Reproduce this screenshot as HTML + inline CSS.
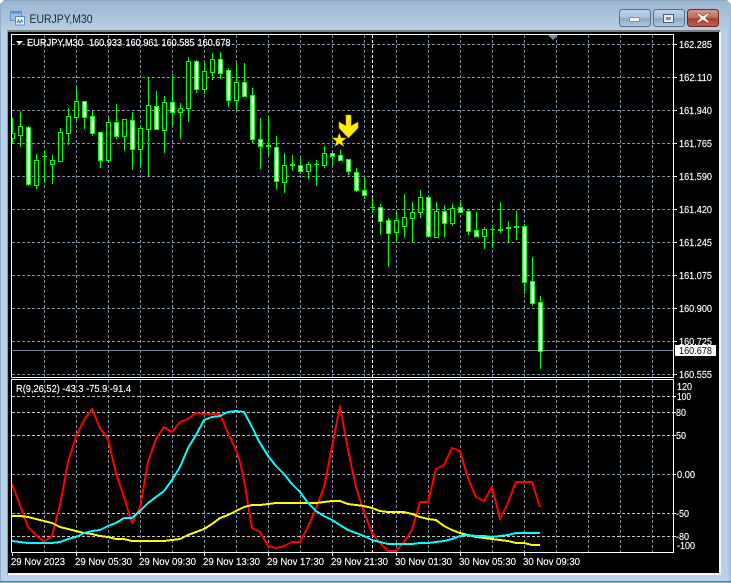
<!DOCTYPE html>
<html><head><meta charset="utf-8"><title>EURJPY,M30</title>
<style>
html,body{margin:0;padding:0;width:731px;height:583px;overflow:hidden;background:#fff}
svg{display:block}
text{font-family:"Liberation Sans",sans-serif;font-size:10.5px;fill:#fff;stroke:#fff;stroke-width:.15px}
</style></head><body>
<svg width="731" height="583" viewBox="0 0 731 583" xmlns="http://www.w3.org/2000/svg">
<defs>
<linearGradient id="tb" x1="0" y1="0" x2="0" y2="1"><stop offset="0" stop-color="#9cb6d0"/><stop offset=".55" stop-color="#aac2da"/><stop offset="1" stop-color="#b9cfe5"/></linearGradient>
<linearGradient id="btn" x1="0" y1="0" x2="0" y2="1"><stop offset="0" stop-color="#c3d5e8"/><stop offset=".48" stop-color="#a9c0d9"/><stop offset=".52" stop-color="#8aa6c4"/><stop offset="1" stop-color="#b4cbe2"/></linearGradient>
<linearGradient id="cl" x1="0" y1="0" x2="0" y2="1"><stop offset="0" stop-color="#d9988a"/><stop offset=".48" stop-color="#c46a5a"/><stop offset=".52" stop-color="#ac3c2c"/><stop offset="1" stop-color="#c4604c"/></linearGradient>
<clipPath id="up"><rect x="12" y="35" width="661" height="342"/></clipPath>
<clipPath id="lo"><rect x="12" y="380" width="661" height="172"/></clipPath>
</defs>
<rect x="0" y="0" width="731" height="583" rx="5" fill="#b9d2ea"/>
<rect x="0" y="0" width="731" height="31" fill="url(#tb)"/>
<path d="M0 5Q0 0 5 0H726Q731 0 731 5" fill="none" stroke="#7d93a8" stroke-width="1"/>
<path d="M0 0H4L0 4zM731 0H727L731 4z" fill="#fff"/>
<rect x="0" y="581" width="731" height="1" fill="#3d8a9c"/>
<rect x="0" y="582" width="731" height="1" fill="#7fb2c4"/>
<rect x="729" y="4" width="2" height="577" fill="#a3bfd8"/>
<rect x="0" y="4" width="1" height="577" fill="#8fb0cc"/>

<!-- title icon -->
<rect x="10.5" y="11.5" width="11" height="9" fill="#9cc0ea" stroke="#5b8ccb"/>
<rect x="10.5" y="11.5" width="11" height="2" fill="#5b8ccb"/>
<rect x="15.5" y="16.5" width="9" height="8.5" fill="#e8f1fb" stroke="#5b8ccb"/>
<path d="M17 23l1.5-3 1.5 3 1.5-3 1 2" fill="none" stroke="#3f76bb"/>
<text x="29.5" y="23" style="font-size:12px;fill:#1c2733;stroke:none" textLength="63" lengthAdjust="spacingAndGlyphs">EURJPY,M30</text>

<!-- window buttons -->
<rect x="619.5" y="9.5" width="31" height="17" rx="3" fill="url(#btn)" stroke="#5c6f86"/>
<rect x="629.5" y="17.5" width="10" height="4" rx="1" fill="#eef2f6" stroke="#66788e" stroke-width=".8"/>
<rect x="653.5" y="9.5" width="31" height="17" rx="3" fill="url(#btn)" stroke="#5c6f86"/>
<rect x="663.5" y="14.5" width="10" height="8" fill="#e8eef4" stroke="#4d6076"/>
<rect x="666" y="17" width="5" height="3" fill="#7f93a8"/>
<rect x="687.5" y="9.5" width="31" height="17" rx="3" fill="url(#cl)" stroke="#6b2b24"/>
<path d="M699 13.5l4 2.5 4-2.5 3 0-4.5 4.5 4.5 4.5-3 0-4-2.5-4 2.5-3 0 4.5-4.5-4.5-4.5z" fill="#f4f2f0" stroke="#8a4a40" stroke-width=".6"/>

<!-- client area -->
<rect x="7" y="30" width="713" height="2" fill="#7c7f82"/>
<rect x="7" y="30" width="1" height="545" fill="#8f9aa6"/>
<rect x="8" y="32" width="711" height="541" fill="#000"/>
<rect x="8" y="573" width="713" height="2" fill="#f2f5f8"/>
<rect x="719" y="32" width="2" height="543" fill="#f2f5f8"/>

<!-- grids -->
<g shape-rendering="crispEdges" fill="none">
<path clip-path="url(#up)" stroke="#7f90a2" stroke-dasharray="3 2" d="M12 44.5H673M12 77.5H673M12 110.5H673M12 143.5H673M12 176.5H673M12 209.5H673M12 242.5H673M12 275.5H673M12 308.5H673M12 341.5H673M12 374.5H673"/>
<path clip-path="url(#up)" stroke="#7f90a2" stroke-dasharray="3 2" d="M44.5 35V377M76.5 35V377M108.5 35V377M140.5 35V377M172.5 35V377M204.5 35V377M236.5 35V377M268.5 35V377M300.5 35V377M332.5 35V377M364.5 35V377M396.5 35V377M428.5 35V377M460.5 35V377M492.5 35V377M524.5 35V377M556.5 35V377M588.5 35V377M620.5 35V377M652.5 35V377"/>
<path clip-path="url(#up)" stroke="#fff" stroke-dasharray="3 2" d="M372.5 35V377"/>
<path stroke="#778899" d="M12 350.5H673"/>
<path clip-path="url(#lo)" stroke="#7f90a2" stroke-dasharray="3 2" d="M44.5 380V552M76.5 380V552M108.5 380V552M140.5 380V552M172.5 380V552M204.5 380V552M236.5 380V552M268.5 380V552M300.5 380V552M332.5 380V552M364.5 380V552M396.5 380V552M428.5 380V552M460.5 380V552M492.5 380V552M524.5 380V552M556.5 380V552M588.5 380V552M620.5 380V552M652.5 380V552"/>
<path clip-path="url(#lo)" stroke="#fff" stroke-dasharray="3 2" d="M372.5 380V552"/>
<path clip-path="url(#lo)" stroke="#c8c8c8" stroke-dasharray="3 2" d="M12 396.5H673M12 412.5H673M12 435.5H673M12 513.5H673M12 536.5H673"/>
<path clip-path="url(#lo)" stroke="#8c9aa8" stroke-dasharray="3 2" d="M12 474.5H673"/>

<!-- candles -->
<g clip-path="url(#up)">
<path stroke="#00ff00" d="M12.5 118V143M20.5 111V147M28.5 126V186M36.5 154V189M44.5 150V183M52.5 155V184M60.5 128V162M68.5 108V145M76.5 88V120M84.5 101V129M92.5 111V136M100.5 132V168M108.5 118V160M116.5 104V139M124.5 119V151M132.5 112V170M140.5 125V168M148.5 78V176M156.5 91V129M164.5 96V153M172.5 74V126M180.5 103V139M188.5 57V122M196.5 60V93M204.5 62V94M212.5 53V80M220.5 52V79M228.5 68V107M236.5 63V111M244.5 63V96M252.5 88V144M260.5 118V169M268.5 116V156M276.5 136V189M284.5 153V193M292.5 155V171M300.5 157V174M308.5 162V179M316.5 160V186M324.5 146V168M332.5 153V165M340.5 150V161M348.5 159V175M356.5 168V192M364.5 178V199M372.5 197V213M380.5 204V235M388.5 218V267M396.5 212V241M404.5 194V237M412.5 202V243M420.5 190V218M428.5 196V238M436.5 202V238M444.5 205V237M452.5 204V226M460.5 201V213M468.5 209V235M476.5 212V236M484.5 227V249M492.5 226V247M500.5 202V233M508.5 221V243M516.5 211V240M524.5 224V294M532.5 257V306M540.5 296V369"/>
<path stroke="#00ff00" d="M42 156.5h5M266 146.5h5M266 145.5h5M290 165.5h5M290 164.5h5M314 164.5h5M370 207.5h5M490 229.5h5M498 230.5h5M498 229.5h5M506 228.5h5M506 227.5h5M514 227.5h5M514 226.5h5"/>
<path stroke="#00ff00" fill="#000" d="M10.5 133.5h4v5h-4zM18.5 126.5h4v9h-4zM34.5 160.5h4v25h-4zM50.5 160.5h4v4h-4zM58.5 132.5h4v29h-4zM66.5 116.5h4v17h-4zM74.5 101.5h4v16h-4zM106.5 122.5h4v38h-4zM122.5 119.5h4v17h-4zM138.5 128.5h4v21h-4zM146.5 105.5h4v24h-4zM162.5 102.5h4v28h-4zM178.5 108.5h4v4h-4zM186.5 61.5h4v47h-4zM202.5 71.5h4v18h-4zM210.5 59.5h4v13h-4zM234.5 82.5h4v18h-4zM282.5 165.5h4v17h-4zM306.5 164.5h4v7h-4zM322.5 153.5h4v12h-4zM394.5 220.5h4v12h-4zM402.5 217.5h4v9h-4zM410.5 212.5h4v6h-4zM418.5 197.5h4v15h-4zM434.5 211.5h4v26h-4zM450.5 208.5h4v15h-4zM482.5 229.5h4v7h-4z"/>
<path stroke="#00ff00" fill="#fff" d="M26.5 127.5h4v57h-4zM82.5 101.5h4v16h-4zM90.5 116.5h4v17h-4zM98.5 132.5h4v28h-4zM114.5 122.5h4v14h-4zM130.5 120.5h4v29h-4zM154.5 106.5h4v23h-4zM170.5 102.5h4v10h-4zM194.5 61.5h4v28h-4zM218.5 59.5h4v14h-4zM226.5 70.5h4v30h-4zM242.5 82.5h4v14h-4zM250.5 95.5h4v44h-4zM258.5 139.5h4v7h-4zM274.5 147.5h4v34h-4zM298.5 165.5h4v6h-4zM330.5 153.5h4v3h-4zM338.5 155.5h4v5h-4zM346.5 159.5h4v12h-4zM354.5 172.5h4v18h-4zM362.5 190.5h4v5h-4zM378.5 207.5h4v14h-4zM386.5 220.5h4v13h-4zM426.5 197.5h4v39h-4zM442.5 211.5h4v12h-4zM458.5 207.5h4v5h-4zM466.5 211.5h4v20h-4zM474.5 230.5h4v6h-4zM522.5 226.5h4v56h-4zM530.5 281.5h4v22h-4zM538.5 302.5h4v49h-4z"/>
</g>

<!-- indicator lines -->
<g clip-path="url(#lo)" stroke-width="2" stroke-linejoin="round">
<polyline stroke="#ff0000" points="12,484 20,505 28,527 36,535 44,542 52,536 60,505 68,462 76,437 84,420 92,409 100,428 108,439 116,473 124,497 132,523 140,508 148,462 156,439 164,427 172,432 180,422 188,419 196,413 204,414 212,414 220,414 228,433 236,450 240,462 244,480 252,528 260,532 268,546 276,548 284,546 292,542 300,542 308,527 316,508 324,487 332,447 340,406 348,450 356,487 364,512 372,533 380,543 388,551 396,551 404,542 412,530 420,502 428,502 436,469 444,465 452,448 460,451 468,478 476,497 484,501 492,487 500,519 508,503 516,482 524,482 532,482 540,507"/>
<polyline stroke="#ffff00" points="12,516 20,516 28,517 36,519 44,521 52,523 60,527 68,529 76,531 84,533 92,534 100,536 108,537 116,539 124,539 132,541 140,541 148,541 156,541 164,541 172,540 180,539 188,535 196,532 204,529 212,524 220,518 228,515 236,511 244,507 252,505 260,505 268,504 276,503 284,503 292,503 300,503 308,503 316,503 324,502 332,501 340,501 348,504 356,505 364,506 372,508 380,511 388,512 396,512 404,512 412,514 420,517 428,519 436,520 444,526 452,530 460,533 468,535 476,537 484,538 492,539 500,540 508,541 516,543 524,543 532,545 540,545"/>
<polyline stroke="#00ffff" points="12,541 20,542 28,543 36,543 44,543 52,543 60,542 68,539 76,537 84,533 92,531 100,530 108,526 116,523 124,518 132,518 140,511 148,503 156,497 164,491 172,480 180,467 188,448 196,435 204,420 212,417 220,416 228,412 236,411 244,412 252,427 260,443 268,456 276,466 284,474 292,484 300,492 308,503 316,511 324,516 332,520 340,525 348,530 356,533 364,536 372,540 380,542 388,544 396,544 404,544 412,544 420,543 428,543 436,542 444,541 452,539 460,536 468,535 476,536 484,536 492,537 500,536 508,535 516,533 524,533 532,533 540,533"/>
</g>

<!-- frames -->
<path stroke="#fff" d="M11.5 377.5V34.5H673.5V377.5H11.5"/>
<path stroke="#fff" d="M11.5 552.5V379.5H673.5V552.5H11.5"/>
<!-- ticks -->
<path stroke="#fff" d="M674 44.5h3M674 77.5h3M674 110.5h3M674 143.5h3M674 176.5h3M674 209.5h3M674 242.5h3M674 275.5h3M674 308.5h3M674 341.5h3M674 374.5h3M674 396.5h2M674 412.5h2M674 435.5h2M674 474.5h2M674 513.5h2M674 536.5h2M12.5 553v3M76.5 553v3M140.5 553v3M204.5 553v3M268.5 553v3M332.5 553v3M396.5 553v3M460.5 553v3M524.5 553v3"/>
</g>

<!-- marker triangle -->
<path d="M548 35h10l-5 5z" fill="#7f8fa3"/>
<!-- arrow + star -->
<polygon points="346,115 351,115 351,126 358,122 358,128 348.5,138 339,128 339,122 346,126" fill="#ffee00" stroke="#d9a400" stroke-width=".6"/>
<polygon points="339.3,133 341,138 346.4,138 342,141.3 343.7,146.5 339.3,143.3 334.9,146.5 336.6,141.3 332.2,138 337.6,138" fill="#ffee00" stroke="#d9a400" stroke-width=".5"/>

<!-- header -->
<path d="M16 41h7l-3.5 3.5z" fill="#fff"/>
<text x="27" y="46" textLength="56" lengthAdjust="spacingAndGlyphs">EURJPY,M30</text>
<text x="89" y="46" textLength="33" lengthAdjust="spacingAndGlyphs">160.933</text>
<text x="125.5" y="46" textLength="33" lengthAdjust="spacingAndGlyphs">160.961</text>
<text x="161.5" y="46" textLength="33" lengthAdjust="spacingAndGlyphs">160.585</text>
<text x="197.5" y="46" textLength="33" lengthAdjust="spacingAndGlyphs">160.678</text>
<text x="16" y="392" textLength="115" lengthAdjust="spacingAndGlyphs">R(9,26,52) -43.3 -75.9 -91.4</text>

<!-- price axis -->
<g>
<text x="679" y="48" textLength="33" lengthAdjust="spacingAndGlyphs">162.285</text>
<text x="679" y="81" textLength="33" lengthAdjust="spacingAndGlyphs">162.110</text>
<text x="679" y="114" textLength="33" lengthAdjust="spacingAndGlyphs">161.940</text>
<text x="679" y="147" textLength="33" lengthAdjust="spacingAndGlyphs">161.765</text>
<text x="679" y="180" textLength="33" lengthAdjust="spacingAndGlyphs">161.590</text>
<text x="679" y="213" textLength="33" lengthAdjust="spacingAndGlyphs">161.420</text>
<text x="679" y="246" textLength="33" lengthAdjust="spacingAndGlyphs">161.245</text>
<text x="679" y="279" textLength="33" lengthAdjust="spacingAndGlyphs">161.075</text>
<text x="679" y="312" textLength="33" lengthAdjust="spacingAndGlyphs">160.900</text>
<text x="679" y="345" textLength="33" lengthAdjust="spacingAndGlyphs">160.725</text>
<text x="679" y="378" textLength="33" lengthAdjust="spacingAndGlyphs">160.555</text>
<rect x="675" y="345" width="41" height="11" fill="#fff"/>
<text x="679" y="354" textLength="33" lengthAdjust="spacingAndGlyphs" style="fill:#000;stroke:none">160.678</text>
<text x="677" y="390" textLength="15" lengthAdjust="spacingAndGlyphs">120</text>
<text x="677" y="400" textLength="14" lengthAdjust="spacingAndGlyphs">100</text>
<text x="676" y="416" textLength="10" lengthAdjust="spacingAndGlyphs">80</text>
<text x="676" y="439" textLength="10" lengthAdjust="spacingAndGlyphs">50</text>
<text x="677" y="478" textLength="18" lengthAdjust="spacingAndGlyphs">0.00</text>
<text x="676" y="517" textLength="13" lengthAdjust="spacingAndGlyphs">-50</text>
<text x="676" y="540" textLength="13" lengthAdjust="spacingAndGlyphs">-80</text>
<text x="677" y="549" textLength="18" lengthAdjust="spacingAndGlyphs">-100</text>
</g>

<!-- time axis -->
<g>
<text x="11" y="565" textLength="54" lengthAdjust="spacingAndGlyphs">29 Nov 2023</text>
<text x="75" y="565" textLength="57" lengthAdjust="spacingAndGlyphs">29 Nov 05:30</text>
<text x="139" y="565" textLength="57" lengthAdjust="spacingAndGlyphs">29 Nov 09:30</text>
<text x="203" y="565" textLength="57" lengthAdjust="spacingAndGlyphs">29 Nov 13:30</text>
<text x="267" y="565" textLength="57" lengthAdjust="spacingAndGlyphs">29 Nov 17:30</text>
<text x="331" y="565" textLength="57" lengthAdjust="spacingAndGlyphs">29 Nov 21:30</text>
<text x="395" y="565" textLength="57" lengthAdjust="spacingAndGlyphs">30 Nov 01:30</text>
<text x="459" y="565" textLength="57" lengthAdjust="spacingAndGlyphs">30 Nov 05:30</text>
<text x="523" y="565" textLength="57" lengthAdjust="spacingAndGlyphs">30 Nov 09:30</text>
</g>
</svg>
</body></html>
